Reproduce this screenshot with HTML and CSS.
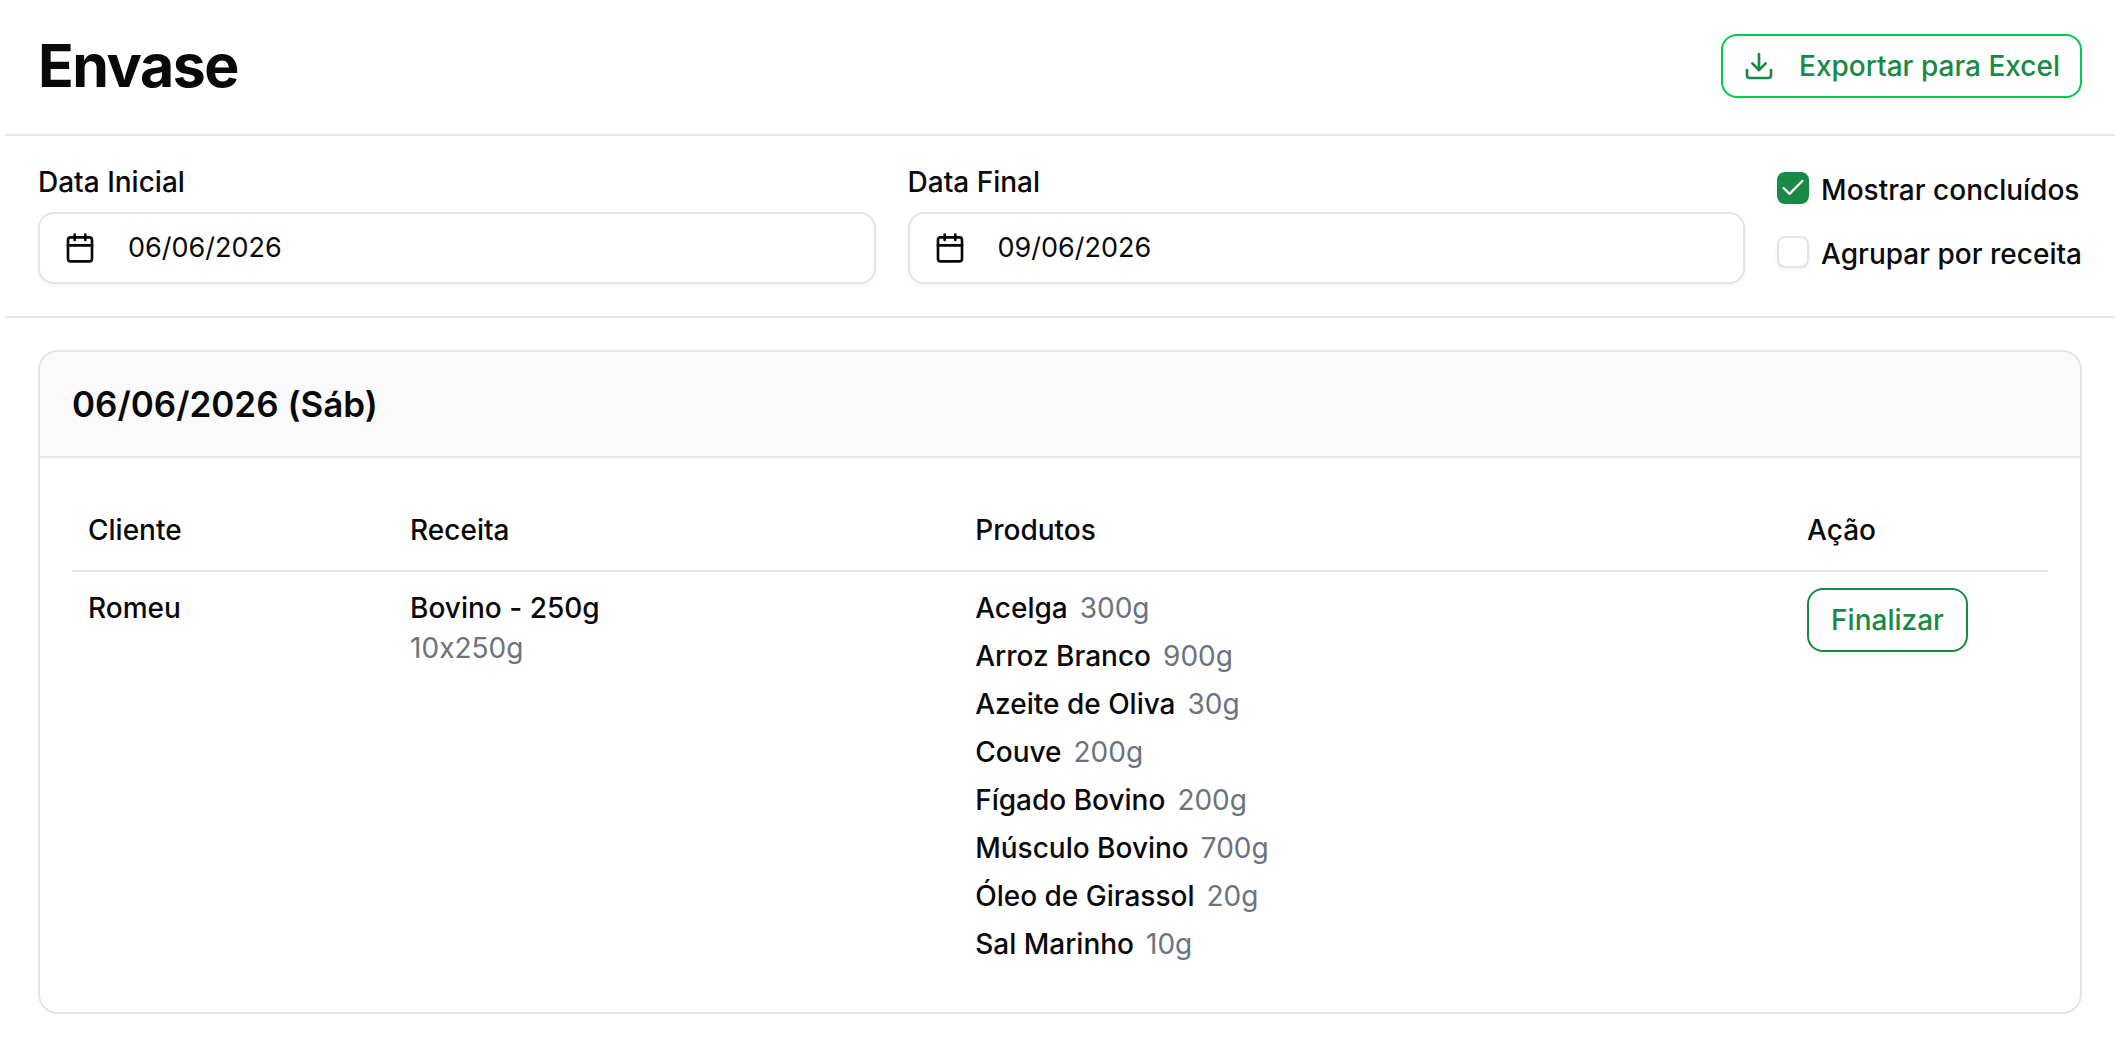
FILE: index.html
```
<!DOCTYPE html>
<html lang="pt-BR">
  <head>
    <meta charset="UTF-8" />
    <meta name="viewport" content="width=device-width, initial-scale=1.0" />
    <title>Envase</title>
    <link rel="stylesheet" href="styles.css">
  </head>
  <body>
    <header class="page-header">
      <h1>Envase</h1>
      <button type="button" class="btn btn-export">
        <svg class="icon" viewBox="0 0 24 24" aria-hidden="true">
          <path d="M21 15v4a2 2 0 0 1-2 2H5a2 2 0 0 1-2-2v-4" />
          <path d="m7 10 5 5 5-5" />
          <path d="M12 15V3" />
        </svg>
        Exportar para Excel
      </button>
    </header>

    <form class="filters">
      <div class="field">
        <label for="dataInicial">Data Inicial</label>
        <div class="date-input">
          <svg class="icon" viewBox="0 0 24 24" aria-hidden="true">
            <path d="M8 2v4" />
            <path d="M16 2v4" />
            <rect width="18" height="18" x="3" y="4" rx="2" />
            <path d="M3 10h18" />
          </svg>
          <input type="text" id="dataInicial" value="06/06/2026" />
        </div>
      </div>
      <div class="field">
        <label for="dataFinal">Data Final</label>
        <div class="date-input">
          <svg class="icon" viewBox="0 0 24 24" aria-hidden="true">
            <path d="M8 2v4" />
            <path d="M16 2v4" />
            <rect width="18" height="18" x="3" y="4" rx="2" />
            <path d="M3 10h18" />
          </svg>
          <input type="text" id="dataFinal" value="09/06/2026" />
        </div>
      </div>
      <div class="options">
        <div class="option">
          <span class="check">
            <input type="checkbox" id="mostrarConcluidos" checked />
            <svg viewBox="0 0 24 24" aria-hidden="true">
              <path d="M20 6 9 17l-5-5" />
            </svg>
          </span>
          <label for="mostrarConcluidos">Mostrar concluídos</label>
        </div>
        <div class="option">
          <span class="check">
            <input type="checkbox" id="agruparReceita" />
            <svg viewBox="0 0 24 24" aria-hidden="true">
              <path d="M20 6 9 17l-5-5" />
            </svg>
          </span>
          <label for="agruparReceita">Agrupar por receita</label>
        </div>
      </div>
    </form>

    <main>
      <section class="card">
        <h2>06/06/2026 (Sáb)</h2>
        <div class="card-body">
          <table>
            <thead>
              <tr>
                <th class="col-cliente">Cliente</th>
                <th class="col-receita">Receita</th>
                <th class="col-produtos">Produtos</th>
                <th>Ação</th>
              </tr>
            </thead>
            <tbody>
              <tr>
                <td class="strong">Romeu</td>
                <td>
                  <div class="strong">Bovino - 250g</div>
                  <div class="muted">10x250g</div>
                </td>
                <td>
                  <ul class="products">
                    <li><span class="strong">Acelga</span><span class="muted">300g</span></li>
                    <li><span class="strong">Arroz Branco</span><span class="muted">900g</span></li>
                    <li><span class="strong">Azeite de Oliva</span><span class="muted">30g</span></li>
                    <li><span class="strong">Couve</span><span class="muted">200g</span></li>
                    <li><span class="strong">Fígado Bovino</span><span class="muted">200g</span></li>
                    <li><span class="strong">Músculo Bovino</span><span class="muted">700g</span></li>
                    <li><span class="strong">Óleo de Girassol</span><span class="muted">20g</span></li>
                    <li><span class="strong">Sal Marinho</span><span class="muted">10g</span></li>
                  </ul>
                </td>
                <td>
                  <button type="button" class="btn btn-finish">Finalizar</button>
                </td>
              </tr>
            </tbody>
          </table>
        </div>
      </section>
    </main>
  </body>
</html>
```
FILE: styles.css
```
:root {
  --text: #09090b;
  --muted: #6b7280;
  --border: #e4e4e4;
  --green: #188a46;
  --green-light: #00c950;
  --shadow: 0 2px 4px rgba(0, 0, 0, 0.05);
}
* {
  box-sizing: border-box;
}
body {
  margin: 0;
  padding: 0 2px 0 6px;
  background: white;
  color: var(--text);
  font-family: Inter, "Liberation Sans", sans-serif;
  font-size: 28px;
  line-height: 40px;
  /* keeps the x in "10x250g" a plain letter */
  font-variant-ligatures: no-contextual;
}
h1,
h2 {
  margin: 0;
}
input,
button {
  font: inherit;
  color: inherit;
}

.page-header {
  display: flex;
  align-items: center;
  justify-content: space-between;
  padding: 30px 32px 32px;
  border-bottom: 2px solid var(--border);
}
h1 {
  font-size: 59px;
  font-weight: 700;
  line-height: 72px;
  letter-spacing: -0.025em;
}

.btn {
  display: inline-flex;
  align-items: center;
  height: 64px;
  border: 2px solid var(--green);
  border-radius: 16px;
  background: white;
  color: var(--green);
  font-weight: 500;
  box-shadow: var(--shadow);
  cursor: pointer;
}
.btn-export {
  gap: 24px;
  padding: 0 20px;
  border-color: var(--green-light);
}
.btn-finish {
  padding: 0 22px;
}
.icon {
  width: 32px;
  height: 32px;
  flex-shrink: 0;
  fill: none;
  stroke: currentColor;
  stroke-width: 2;
  stroke-linecap: round;
  stroke-linejoin: round;
}

.filters {
  display: flex;
  gap: 32px;
  padding: 32px;
  border-bottom: 2px solid var(--border);
}
.field {
  display: flex;
  flex: 1;
  flex-direction: column;
  gap: 16px;
}
.field label {
  font-weight: 500;
  line-height: 28px;
}
.date-input {
  display: flex;
  align-items: center;
  gap: 32px;
  height: 72px;
  padding: 0 24px;
  border: 2px solid var(--border);
  border-radius: 16px;
  box-shadow: var(--shadow);
}
.date-input input {
  flex: 1;
  min-width: 0;
  padding: 0;
  border: none;
  outline: none;
  background: none;
  font-size: 27px;
}

.options {
  display: flex;
  flex-direction: column;
  gap: 24px;
}
.option {
  display: flex;
  gap: 12px;
  height: 40px;
  font-weight: 500;
}
.option label {
  padding-top: 2px;
}
.check {
  display: grid;
  place-items: center;
}
.check input,
.check svg {
  grid-area: 1 / 1;
}
.check input {
  appearance: none;
  width: 32px;
  height: 32px;
  margin: 0;
  border: 2px solid var(--border);
  border-radius: 8px;
  background: white;
  box-shadow: var(--shadow);
}
.check input:checked {
  border-color: var(--green);
  background: var(--green);
}
.check svg {
  width: 28px;
  height: 28px;
  fill: none;
  stroke: white;
  stroke-width: 2;
  stroke-linecap: round;
  stroke-linejoin: round;
  pointer-events: none;
}

main {
  padding: 32px;
}
.card {
  border: 2px solid var(--border);
  border-radius: 20px;
  overflow: hidden;
}
.card h2 {
  padding: 32px;
  border-bottom: 2px solid var(--border);
  background: #fafafa;
  font-size: 35px;
  font-weight: 600;
  line-height: 40px;
}
.card-body {
  padding: 32px;
}

table {
  width: 100%;
  table-layout: fixed;
  border-spacing: 0;
}
th {
  height: 82px;
  padding: 0 16px;
  border-bottom: 2px solid var(--border);
  font-weight: 500;
  text-align: left;
}
td {
  padding: 16px;
  vertical-align: top;
}
.col-cliente {
  width: 16.3%;
}
.col-receita {
  width: 28.6%;
}
.col-produtos {
  width: 42.1%;
}
.strong {
  font-weight: 500;
}
.muted {
  color: var(--muted);
}
.products {
  display: flex;
  flex-direction: column;
  gap: 8px;
  margin: 0;
  padding: 0;
  list-style: none;
}
.products li {
  display: flex;
  gap: 12px;
}
```
